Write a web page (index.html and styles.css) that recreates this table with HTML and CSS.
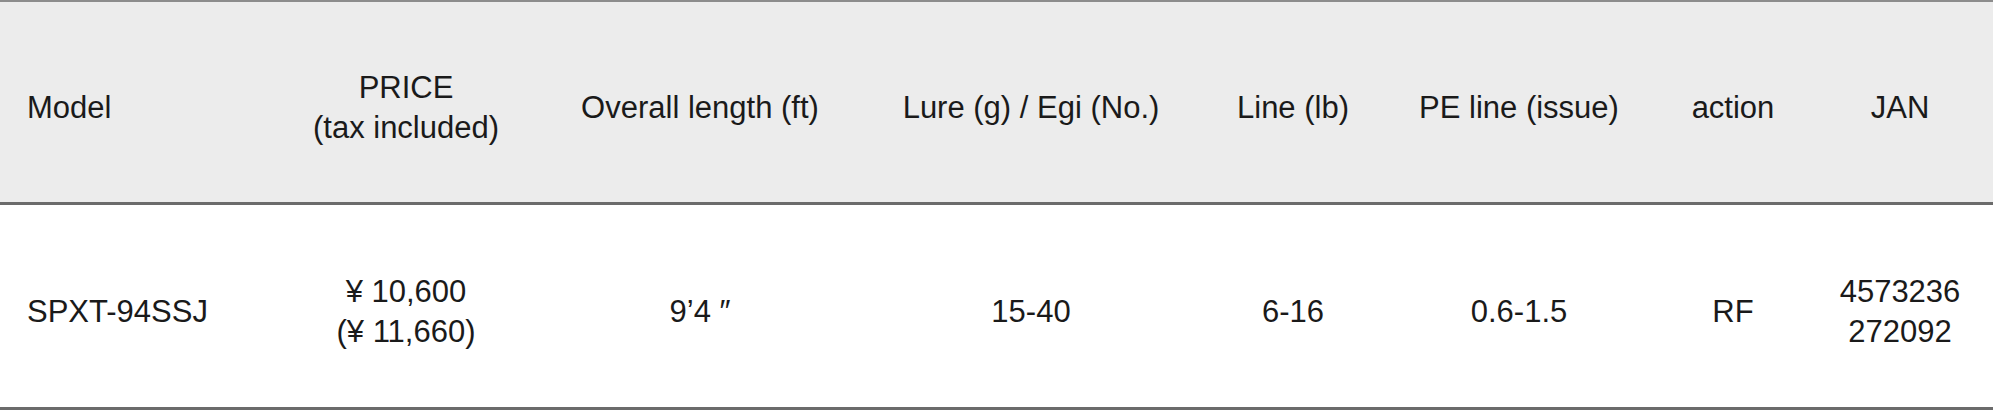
FILE: index.html
```html
<!DOCTYPE html>
<html lang="en">
<head>
    <meta charset="UTF-8">
    <meta name="viewport" content="width=device-width, initial-scale=1.0">
    <title>Rod Spec</title>
    <link rel="stylesheet" href="styles.css">
</head>
<body>
    <!-- Spec table -->
    <table class="spec-table">
        <colgroup>
            <col class="col-model">
            <col class="col-price">
            <col class="col-length">
            <col class="col-lure">
            <col class="col-line">
            <col class="col-pe">
            <col class="col-action">
            <col class="col-jan">
        </colgroup>
        <thead>
            <tr>
                <th class="left">Model</th>
                <th>PRICE<br>(tax included)</th>
                <th>Overall length (ft)</th>
                <th>Lure (g) / Egi (No.)</th>
                <th>Line (lb)</th>
                <th>PE line (issue)</th>
                <th>action</th>
                <th>JAN</th>
            </tr>
        </thead>
        <tbody>
            <tr>
                <td class="left">SPXT-94SSJ</td>
                <td>¥ 10,600<br>(¥ 11,660)</td>
                <td>9’4 ″</td>
                <td>15-40</td>
                <td>6-16</td>
                <td>0.6-1.5</td>
                <td>RF</td>
                <td>4573236<br>272092</td>
            </tr>
        </tbody>
    </table>
</body>
</html>
```

FILE: styles.css
```css
body {
    margin: 0;
    padding: 0;
    background-color: #fff;
    font-family: "Liberation Sans", Arial, "Noto Sans CJK JP", sans-serif;
    color: #1a1a1a;
}

.spec-table {
    width: 1993px;
    border-collapse: separate;
    border-spacing: 0;
    table-layout: fixed;
    font-size: 31px;
    line-height: 40px;
}

.col-model { width: 267px; }
.col-price { width: 278px; }
.col-length { width: 310px; }
.col-lure { width: 352px; }
.col-line { width: 172px; }
.col-pe { width: 280px; }
.col-action { width: 148px; }
.col-jan { width: 186px; }

.spec-table th,
.spec-table td {
    font-weight: normal;
    text-align: center;
    vertical-align: middle;
    padding: 12px 0 0 0; /* text sits a little below the middle */
    box-sizing: border-box;
}

.spec-table th {
    height: 205px;
    background-color: #ececec;
    border-top: 2px solid #8c8c8c;
    border-bottom: 3px solid #6b6b6b;
}

.spec-table td {
    height: 205px;
    border-bottom: 3px solid #6b6b6b;
}

.spec-table .left {
    text-align: left;
    padding-left: 27px;
}
```
